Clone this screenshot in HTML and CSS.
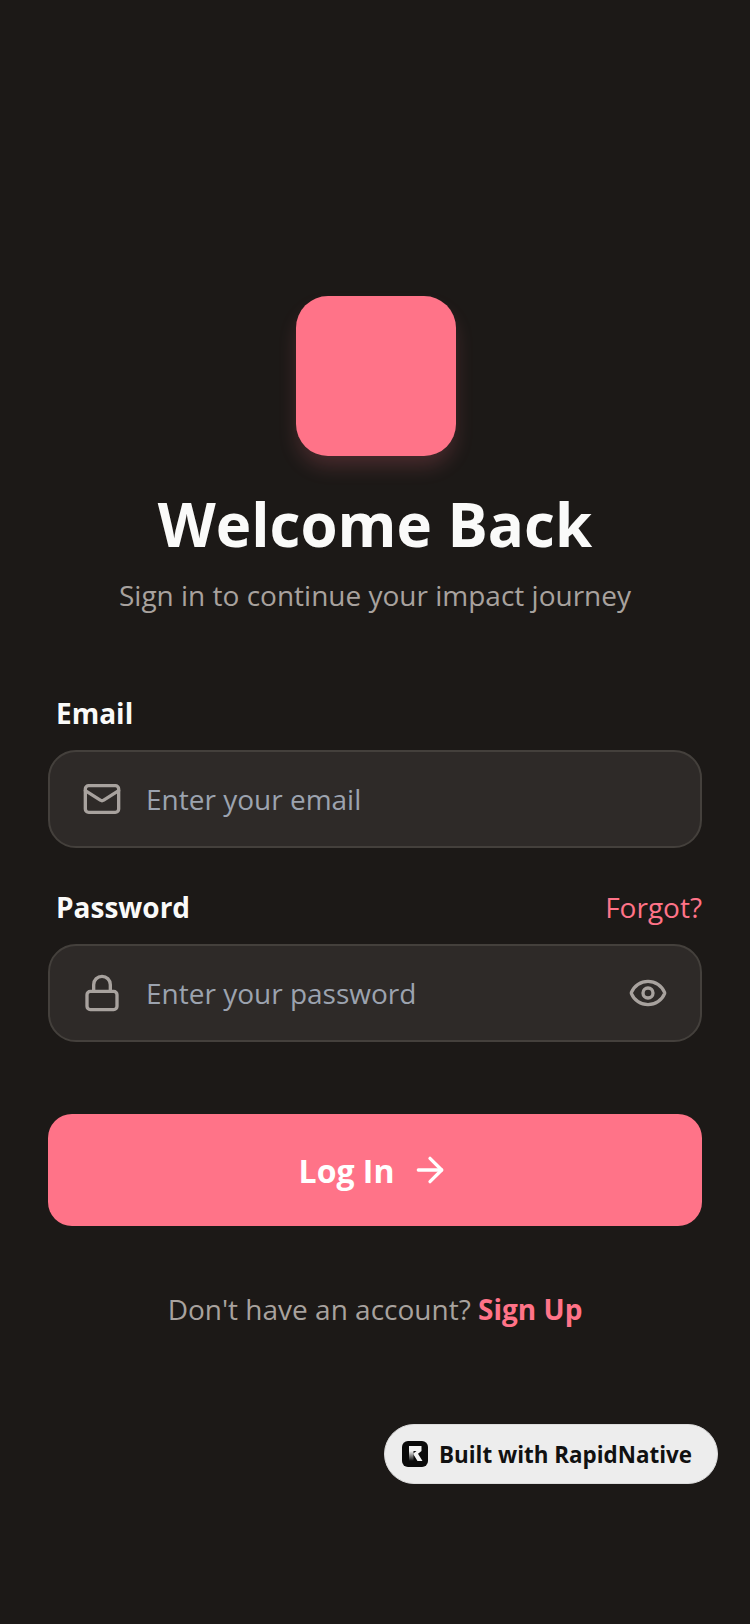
FILE: index.html
```
<!DOCTYPE html>
<html lang="en">
<head>
<meta charset="utf-8">
<title>Welcome Back</title>
<link rel="stylesheet" href="styles.css">
</head>
<body>
<main class="screen">
  <div class="logo"></div>
  <h1 class="title">Welcome Back</h1>
  <p class="subtitle">Sign in to continue your impact journey</p>
  <form class="form">
    <div class="label-row"><span class="label">Email</span></div>
    <div class="field">
      <svg class="icon" viewBox="0 0 24 24" fill="none" stroke="currentColor" stroke-width="2" stroke-linecap="round" stroke-linejoin="round"><rect x="2" y="4" width="20" height="16" rx="2"/><path d="m22 7-8.97 5.7a1.94 1.94 0 0 1-2.06 0L2 7"/></svg>
      <span class="placeholder">Enter your email</span>
    </div>
    <div class="label-row label-row-second"><span class="label">Password</span><span class="forgot">Forgot?</span></div>
    <div class="field">
      <svg class="icon" viewBox="0 0 24 24" fill="none" stroke="currentColor" stroke-width="2" stroke-linecap="round" stroke-linejoin="round"><rect x="3" y="11" width="18" height="11" rx="2"/><path d="M7 11V7a5 5 0 0 1 10 0v4"/></svg>
      <span class="placeholder">Enter your password</span>
      <svg class="icon eye" viewBox="0 0 24 24" fill="none" stroke="currentColor" stroke-width="2" stroke-linecap="round" stroke-linejoin="round"><path d="M2.06 12.35a1 1 0 0 1 0-.7 10.75 10.75 0 0 1 19.88 0 1 1 0 0 1 0 .7 10.75 10.75 0 0 1-19.88 0"/><circle cx="12" cy="12" r="3"/></svg>
    </div>
    <div class="button">
      <span>Log In</span>
      <svg class="arrow" viewBox="0 0 24 24" fill="none" stroke="currentColor" stroke-width="2" stroke-linecap="round" stroke-linejoin="round"><path d="M5 12h14"/><path d="m12 5 7 7-7 7"/></svg>
    </div>
  </form>
  <p class="signup">Don't have an account? <b class="signup-link">Sign Up</b></p>
</main>
<div class="badge">
  <svg class="badge-logo" viewBox="0 0 26 26">
    <defs><linearGradient id="stem" x1="0" y1="0" x2="0" y2="1"><stop offset="0" stop-color="#f4f4f4"/><stop offset="1" stop-color="#0b0b0b"/></linearGradient></defs>
    <rect width="26" height="26" rx="6" fill="#0b0b0b"/>
    <path d="M7 5h12.500v5l-3.500 2.800 4.500 7.200h-5l-4.500-7.200 3.500-2.800H7z" fill="#f4f4f4"/>
    <path d="M7 10h4.500v10H7z" fill="url(#stem)"/>
  </svg>
  <span>Built with RapidNative</span>
</div>
</body>
</html>
```
FILE: styles.css
```
* { box-sizing: border-box; }
html, body { margin: 0; height: 100%; }
body {
  background: #1c1917;
  font-family: "Open Sans", sans-serif;
  position: relative;
  overflow: hidden;
}
.screen {
  padding: 296px 48px 0;
  display: flex;
  flex-direction: column;
  align-items: center;
}
.logo {
  width: 160px;
  height: 160px;
  margin-left: 2px;
  border-radius: 32px;
  background: #ff7388;
  box-shadow: 0 12px 20px -2px rgba(255, 115, 136, 0.2);
}
.title {
  margin: 32px 0 0;
  font-size: 60px;
  line-height: 72px;
  font-weight: 700;
  color: #fafaf9;
}
.subtitle {
  margin: 15px 0 0;
  font-size: 28px;
  line-height: 40px;
  color: #a8a29e;
}
.form {
  width: 100%;
  margin-top: 78px;
  display: flex;
  flex-direction: column;
}
.label-row {
  display: flex;
  justify-content: space-between;
  align-items: center;
  padding-left: 8px;
  height: 40px;
  margin-bottom: 17px;
}
.label-row-second { margin-top: 39px; }
.label {
  font-size: 28px;
  font-weight: 700;
  color: #fafaf9;
}
.forgot {
  font-size: 28px;
  color: #ff7388;
}
.field {
  height: 98px;
  display: flex;
  align-items: center;
  gap: 24px;
  padding: 0 32px;
  border: 2px solid #44403c;
  border-radius: 28px;
  background: #2e2a28;
  color: #a8a29e;
}
.icon {
  width: 40px;
  height: 40px;
  flex: none;
}
.placeholder {
  flex: 1;
  font-size: 28px;
  color: #9ca3af;
}
.button {
  margin-top: 72px;
  height: 112px;
  padding-right: 1px;
  border-radius: 24px;
  background: #ff7388;
  color: #fff;
  display: flex;
  align-items: center;
  justify-content: center;
  gap: 16px;
  font-size: 32px;
  font-weight: 700;
}
.arrow {
  width: 40px;
  height: 40px;
}
.signup {
  margin: 63px 0 0;
  font-size: 28px;
  line-height: 40px;
  color: #a8a29e;
}
.signup-link { color: #ff7388; }
.badge {
  position: absolute;
  left: 384px;
  top: 1424px;
  width: 334px;
  height: 60px;
  border-radius: 30px;
  background: #ededed;
  border: 1px solid #dcdcdc;
  display: flex;
  align-items: center;
  gap: 11px;
  padding-left: 17px;
  font-size: 22.4px;
  font-weight: 700;
  color: #111;
}
.badge-logo {
  width: 26px;
  height: 26px;
  flex: none;
}
```
